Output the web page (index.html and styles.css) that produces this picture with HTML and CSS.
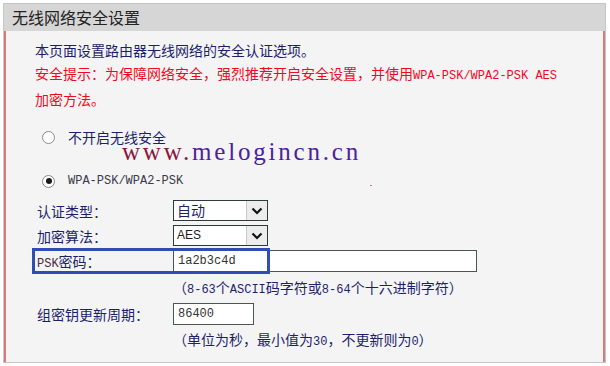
FILE: index.html
```html
<!DOCTYPE html>
<html lang="zh-CN">
<head>
  <meta charset="UTF-8">
  <meta name="viewport" content="width=device-width, initial-scale=1.0">
  <title>无线网络安全设置</title>
  <link rel="stylesheet" href="styles.css">
</head>
<body>
  <div class="panel">
    <div class="panel-head">无线网络安全设置</div>
    <div class="panel-body">
      <p class="intro">本页面设置路由器无线网络的安全认证选项。</p>
      <p class="warn">安全提示：为保障网络安全，强烈推荐开启安全设置，并使用<span class="mono">WPA-PSK/WPA2-PSK AES</span><br>加密方法。</p>

      <label class="radio-row off"><span class="radio"></span>不开启无线安全</label>
      <label class="radio-row wpa"><span class="radio checked"></span><span class="mono">WPA-PSK/WPA2-PSK</span></label>

      <div class="form">
        <div class="row">
          <span class="label">认证类型：</span>
          <div class="select"><span class="value">自动</span><span class="arrow"><svg width="12" height="8" viewBox="0 0 12 8"><polyline points="1.5,1.5 6,6 10.5,1.5" fill="none" stroke="#111" stroke-width="2.2"/></svg></span></div>
        </div>
        <div class="row">
          <span class="label">加密算法：</span>
          <div class="select"><span class="value latin">AES</span><span class="arrow"><svg width="12" height="8" viewBox="0 0 12 8"><polyline points="1.5,1.5 6,6 10.5,1.5" fill="none" stroke="#111" stroke-width="2.2"/></svg></span></div>
        </div>
        <div class="row psk">
          <span class="label"><span class="mono psk-tag">PSK</span>密码：</span>
          <div class="input wide">1a2b3c4d</div>
          <span class="mark"></span>
        </div>
        <div class="hint">（<span class="mono">8-63</span>个<span class="mono">ASCII</span>码字符或<span class="mono">8-64</span>个十六进制字符）</div>
        <div class="row">
          <span class="label">组密钥更新周期：</span>
          <div class="input short">86400</div>
        </div>
        <div class="hint">（单位为秒，最小值为<span class="mono">30</span>，不更新则为<span class="mono">0</span>）</div>
      </div>

      <div class="watermark"><span class="www">www.</span>melogincn.cn</div>
      <span class="dot"></span>
    </div>
  </div>
</body>
</html>
```

FILE: styles.css
```css
body {
  margin: 0;
  background: #fff;
  font-family: "Noto Sans CJK SC", "Liberation Sans", sans-serif;
  font-size: 14px;
  color: #1d1f6b;
}
.panel {
  margin: 3px 0 0 3px;
  width: 603px;
  height: 360px;
  box-sizing: border-box;
  border: 1px solid #c6c6c6;
  display: flex;
  flex-direction: column;
}
.panel-head {
  height: 27px;
  line-height: 27px;
  padding-left: 8px;
  background: #d6d6d6;
  color: #222;
  font-size: 16px;
}
.panel-body {
  position: relative;
  flex: 1;
  padding: 8px 0 0 29px;
  background: #f4f4f5;
  border-left: 2px solid #d9777b;
  border-right: 2px solid #d9777b;
}
.intro, .warn {
  margin: 0;
  line-height: 23px;
}
.warn {
  color: #ee0b1f;
}
.mono {
  font-family: "Liberation Mono", monospace;
  font-size: 12px;
}
.radio-row {
  display: flex;
  align-items: center;
  height: 24px;
  padding-left: 7px;
  color: #1d1f6b;
}
.radio-row.off {
  margin-top: 14px;
}
.radio-row.wpa {
  margin-top: 20px;
  color: #3a3a4a;
}
.radio {
  width: 11px;
  height: 11px;
  margin-right: 13px;
  border: 1px solid #8a8a8a;
  border-radius: 50%;
  background: #fff;
  position: relative;
}
.radio.checked::after {
  content: "";
  position: absolute;
  left: 2.5px;
  top: 2.5px;
  width: 6px;
  height: 6px;
  border-radius: 50%;
  background: #1a1a1a;
}
.form {
  margin-top: 5px;
  padding-left: 2px;
}
.row {
  display: flex;
  align-items: center;
  height: 25px;
}
.row.psk {
  position: relative;
  height: 26px;
}
.label {
  width: 136px;
  flex-shrink: 0;
}
.psk-tag {
  color: #4a2a3a;
}
.select {
  display: flex;
  width: 95px;
  height: 21px;
  box-sizing: border-box;
  border: 1px solid #2f3b3b;
  background: #fff;
}
.select .value {
  flex: 1;
  padding-left: 3px;
  line-height: 19px;
}
.select .latin {
  font-family: "Liberation Sans", sans-serif;
  font-size: 12px;
  color: #222;
}
.select .arrow {
  width: 20px;
  border-left: 1px solid #c8c8c8;
  background: #ececec;
  display: flex;
  align-items: center;
  justify-content: center;
}
.input {
  height: 22px;
  box-sizing: border-box;
  border: 1px solid #485656;
  background: #fff;
  padding-left: 4px;
  line-height: 20px;
  font-family: "Liberation Mono", monospace;
  font-size: 12px;
  color: #333;
}
.input.wide {
  width: 304px;
}
.input.short {
  width: 81px;
}
.mark {
  position: absolute;
  left: -5px;
  top: 0;
  width: 238px;
  height: 26px;
  box-sizing: border-box;
  border: 3px solid #2d4fb3;
}
.hint {
  height: 27px;
  line-height: 27px;
  padding-left: 136px;
}
.watermark {
  position: absolute;
  left: 116px;
  top: 108px;
  font-family: "Liberation Serif", serif;
  font-size: 25px;
  line-height: 25px;
  letter-spacing: 2.8px;
  color: #4b22a0;
}
.watermark .www {
  color: #8a1740;
}
.dot {
  position: absolute;
  left: 364px;
  top: 154px;
  width: 2px;
  height: 1px;
  background: #c77;
}
```
